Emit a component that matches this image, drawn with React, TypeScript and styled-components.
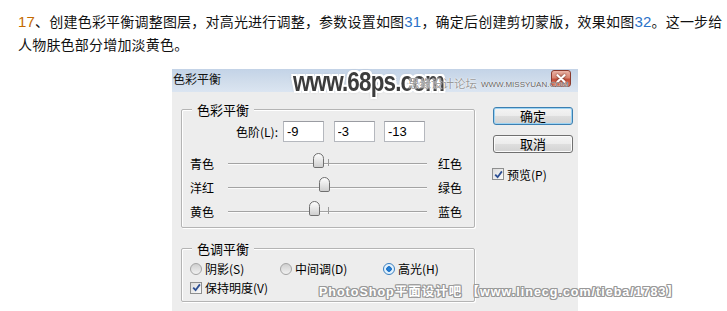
import { createGlobalStyle, styled } from 'styled-components';

const GlobalStyle = createGlobalStyle`
    html, body {
        margin: 0;
        padding: 0;
        overflow: hidden;
        background: #fff;
    }
    body {
        font-family: "Noto Sans CJK SC", "Noto Sans", sans-serif;
        color: #000;
    }
`

const sliders = [
    { left: '青色', right: '红色', value: -9 },
    { left: '洋红', right: '绿色', value: -3 },
    { left: '黄色', right: '蓝色', value: -13 },
]

const tones = [
    { label: '阴影(S)', checked: false },
    { label: '中间调(D)', checked: false },
    { label: '高光(H)', checked: true },
]

const TRACK = 199

const CheckMark = () => (
    <svg width="9" height="9" viewBox="0 0 9 9">
        <path d="M1.2 4.6 L3.6 7.2 L7.9 1.4" fill="none" stroke="#2c4f93" strokeWidth="1.8" />
    </svg>
)

const App = () => {
    return (
        <Page>
            <GlobalStyle />
            <Intro>
                <Num $tone="orange">17</Num>、创建色彩平衡调整图层，对高光进行调整，参数设置如图<Num $tone="blue">31</Num>，确定后创建剪切蒙版，效果如图<Num $tone="blue">32</Num>。这一步给
                <br />
                人物肤色部分增加淡黄色。
            </Intro>

            <Dialog>
                <TitleBar>
                    <TitleText>色彩平衡</TitleText>
                    <CloseButton>
                        <svg width="10" height="9" viewBox="0 0 10 9">
                            <path d="M1.5 1.2 L8.5 7.8 M8.5 1.2 L1.5 7.8" stroke="#fff" strokeWidth="2.2" strokeLinecap="round" />
                        </svg>
                    </CloseButton>
                </TitleBar>

                <DialogBody>
                    <MainColumn>
                        <GroupBox $pad="11px 0 4px 0">
                            <GroupTitle>色彩平衡</GroupTitle>
                            <ValuesRow>
                                <LevelLabel>色阶(L):</LevelLabel>
                                {sliders.map(s => (
                                    <ValueBox key={s.left} readOnly value={String(s.value)} />
                                ))}
                            </ValuesRow>
                            {sliders.map(s => (
                                <SliderRow key={s.left}>
                                    <span>{s.left}</span>
                                    <Track>
                                        <Thumb style={{ left: TRACK / 2 + (s.value * TRACK) / 200 - 5.5 }} />
                                    </Track>
                                    <RightLabel>{s.right}</RightLabel>
                                </SliderRow>
                            ))}
                        </GroupBox>

                        <GroupBox $pad="10px 0 4px 8px">
                            <GroupTitle>色调平衡</GroupTitle>
                            <RadioRow>
                                {tones.map(t => (
                                    <Option key={t.label}>
                                        <Radio $checked={t.checked} />
                                        <span>{t.label}</span>
                                    </Option>
                                ))}
                            </RadioRow>
                            <Option $height={19}>
                                <CheckBox><CheckMark /></CheckBox>
                                <span>保持明度(V)</span>
                            </Option>
                        </GroupBox>
                    </MainColumn>

                    <SideColumn>
                        <DialogButton $focused>确定</DialogButton>
                        <DialogButton>取消</DialogButton>
                        <PreviewRow>
                            <CheckBox><CheckMark /></CheckBox>
                            <span>预览(P)</span>
                        </PreviewRow>
                    </SideColumn>
                </DialogBody>

                <SiteMark>www.68ps.com</SiteMark>
                <ForumMark>思缘设计论坛</ForumMark>
                <ForumUrl>WWW.MISSYUAN.COM</ForumUrl>
                <TiebaMark>PhotoShop平面设计吧 【www.linecg.com/tieba/1783】</TiebaMark>
            </Dialog>
        </Page>
    );
}

export default App;

const Page = styled.div`
    height: 311px;
`

const Intro = styled.p`
    margin: 0;
    padding: 10px 0 0 18px;
    width: 706px;
    font-size: 14px;
    line-height: 23px;
    letter-spacing: 0.2px;
    color: #111;
    white-space: nowrap;
`

const Num = styled.span<{ $tone: 'orange' | 'blue' }>`
    font-family: "Liberation Sans", sans-serif;
    font-size: 15px;
    color: ${p => (p.$tone === 'orange' ? '#c46a00' : '#2a72c8')};
`

const Dialog = styled.div`
    position: relative;
    margin: 13px 0 0 172px;
    width: 406px;
    height: 242px;
    background: #ededed;
    font-size: 12px;
`

const TitleBar = styled.div`
    display: flex;
    align-items: flex-start;
    justify-content: space-between;
    height: 23px;
    padding: 0 7px 0 1px;
    background: linear-gradient(#c3d3e7, #d2deec 60%, #dbe5f1);
`

const TitleText = styled.span`
    margin-top: 2px;
    font-size: 12px;
    line-height: 16px;
    color: #111;
`

const CloseButton = styled.div`
    display: flex;
    align-items: center;
    justify-content: center;
    box-sizing: border-box;
    width: 20px;
    height: 17px;
    margin-top: 1px;
    border: 1px solid #8a3a2e;
    border-radius: 3px;
    background: linear-gradient(#eab3a6, #d98571 45%, #c4503c 55%, #d2735a);

    svg {
        filter: drop-shadow(0 0 1px #5a1c12);
    }
`

const DialogBody = styled.div`
    display: flex;
    align-items: flex-start;
    padding-left: 9px;
`

const MainColumn = styled.div`
    display: flex;
    flex-direction: column;
    gap: 20px;
    padding-top: 17px;
    width: 294px;
`

const GroupBox = styled.div<{ $pad: string }>`
    position: relative;
    box-sizing: border-box;
    width: 294px;
    padding: ${p => p.$pad};
    border: 1px solid #b4b4b4;
    border-radius: 2px;
    box-shadow: inset 1px 1px 0 #fff, 1px 1px 0 #fff;
`

const GroupTitle = styled.span`
    position: absolute;
    top: -9px;
    left: 10px;
    padding: 0 5px;
    background: #ededed;
    font-size: 13px;
    line-height: 17px;
`

const ValuesRow = styled.div`
    display: flex;
    align-items: center;
    gap: 9.5px;
    height: 21px;
    margin-bottom: 9px;
`

const LevelLabel = styled.span`
    width: 48px;
    margin: 0 -4.5px 0 48px;
    text-align: right;
    white-space: nowrap;
`

const ValueBox = styled.input`
    box-sizing: border-box;
    width: 41px;
    height: 21px;
    padding: 0 0 0 3px;
    border: 1px solid #b5b8be;
    border-top-color: #9a9ca2;
    background: #fff;
    font-family: "Liberation Sans", sans-serif;
    font-size: 13px;
    color: #000;
    outline: none;
`

const SliderRow = styled.div`
    display: grid;
    grid-template-columns: 38px ${TRACK}px auto;
    align-items: center;
    height: 24px;
    padding-left: 8px;
`

const RightLabel = styled.span`
    padding-left: 11px;
`

const Track = styled.div`
    position: relative;
    height: 24px;

    &::before {
        content: '';
        position: absolute;
        left: 0;
        right: 0;
        top: 12px;
        height: 1px;
        background: #a3a3a3;
        box-shadow: 0 1px 0 #fbfbfb;
    }

    &::after {
        content: '';
        position: absolute;
        left: ${TRACK / 2}px;
        top: 8px;
        width: 1px;
        height: 7px;
        background: #9a9a9a;
    }
`

const Thumb = styled.div`
    position: absolute;
    top: 2px;
    z-index: 1;
    box-sizing: border-box;
    width: 11px;
    height: 15px;
    border: 1px solid #6f6f6f;
    border-radius: 6px 6px 2px 2px;
    background: linear-gradient(#fdfdfd, #e4e4e4 55%, #cfcfcf);
`

const RadioRow = styled.div`
    display: grid;
    grid-template-columns: 90px 103px auto;
    height: 19px;
`

const Option = styled.div<{ $height?: number }>`
    display: flex;
    align-items: center;
    gap: 3px;
    height: ${p => p.$height ?? 19}px;
`

const Radio = styled.span<{ $checked: boolean }>`
    position: relative;
    box-sizing: border-box;
    width: 12px;
    height: 12px;
    border-radius: 50%;
    border: 1px solid ${p => (p.$checked ? '#3a7fc0' : '#a4a4a4')};
    background: ${p => (p.$checked
        ? 'radial-gradient(circle, #2a8be0 0, #1c6fc4 2.5px, #dff0fc 3px, #eaf5fd 100%)'
        : 'linear-gradient(#cfcfcf, #f2f2f2)')};
`

const CheckBox = styled.span`
    display: flex;
    align-items: center;
    justify-content: center;
    box-sizing: border-box;
    width: 12px;
    height: 12px;
    border: 1px solid #8e8f8f;
    background: linear-gradient(135deg, #dcdcdc, #fafafa);
`

const SideColumn = styled.div`
    display: flex;
    flex-direction: column;
    gap: 10px;
    margin-left: 18px;
    padding-top: 15px;
`

const DialogButton = styled.div<{ $focused?: boolean }>`
    box-sizing: border-box;
    width: 80px;
    height: 18px;
    border: 1px solid ${p => (p.$focused ? '#3c7fb1' : '#707070')};
    border-radius: 3px;
    background: linear-gradient(#f4f4f4, #ececec 48%, #dedede 52%, #d2d2d2);
    box-shadow: ${p => (p.$focused ? 'inset 0 0 0 1px #9cd3f3' : 'inset 0 0 0 1px #fbfbfb')};
    font-size: 13px;
    line-height: 16px;
    text-align: center;
`

const PreviewRow = styled.div`
    display: flex;
    align-items: center;
    gap: 3px;
    height: 16px;
    margin: 3px 0 0 -1px;
`

const SiteMark = styled.div`
    position: absolute;
    top: 0;
    left: 121px;
    transform: scaleX(0.83);
    transform-origin: left top;
    font-family: "Liberation Sans", sans-serif;
    font-size: 27px;
    font-weight: 700;
    line-height: 27px;
    letter-spacing: -1px;
    color: #3c3c3c;
    text-shadow:
        1px 0 0 #fff, -1px 0 0 #fff, 0 1px 0 #fff, 0 -1px 0 #fff,
        2px 0 0 #fff, -2px 0 0 #fff, 0 2px 0 #fff, 0 -2px 0 #fff,
        2px 2px 0 #fff, -2px -2px 0 #fff, 2px -2px 0 #fff, -2px 2px 0 #fff,
        0 0 4px #6a6a6a;
    white-space: nowrap;
`

const ForumMark = styled.div`
    position: absolute;
    top: 6px;
    left: 236px;
    font-size: 11.5px;
    line-height: 16px;
    color: #999;
    text-shadow: 0 0 1px #fff, 0 0 2px #fff;
    white-space: nowrap;
`

const ForumUrl = styled.div`
    position: absolute;
    top: 11px;
    left: 309px;
    font-family: "Liberation Sans", sans-serif;
    font-size: 8px;
    line-height: 10px;
    color: #5e5e5e;
    text-shadow: 0 0 1px #fff, 0 0 1px #fff;
    white-space: nowrap;
`

const TiebaMark = styled.div`
    position: absolute;
    top: 215px;
    left: 147px;
    font-family: "Liberation Sans", "Noto Sans CJK SC", sans-serif;
    font-size: 12.5px;
    font-weight: 700;
    line-height: 16px;
    letter-spacing: 1px;
    color: #fff;
    text-shadow:
        1px 0 0 #999, -1px 0 0 #999, 0 1px 0 #999, 0 -1px 0 #999,
        1px 1px 0 #999, -1px -1px 0 #999, 1px -1px 0 #999, -1px 1px 0 #999;
    white-space: nowrap;
`
